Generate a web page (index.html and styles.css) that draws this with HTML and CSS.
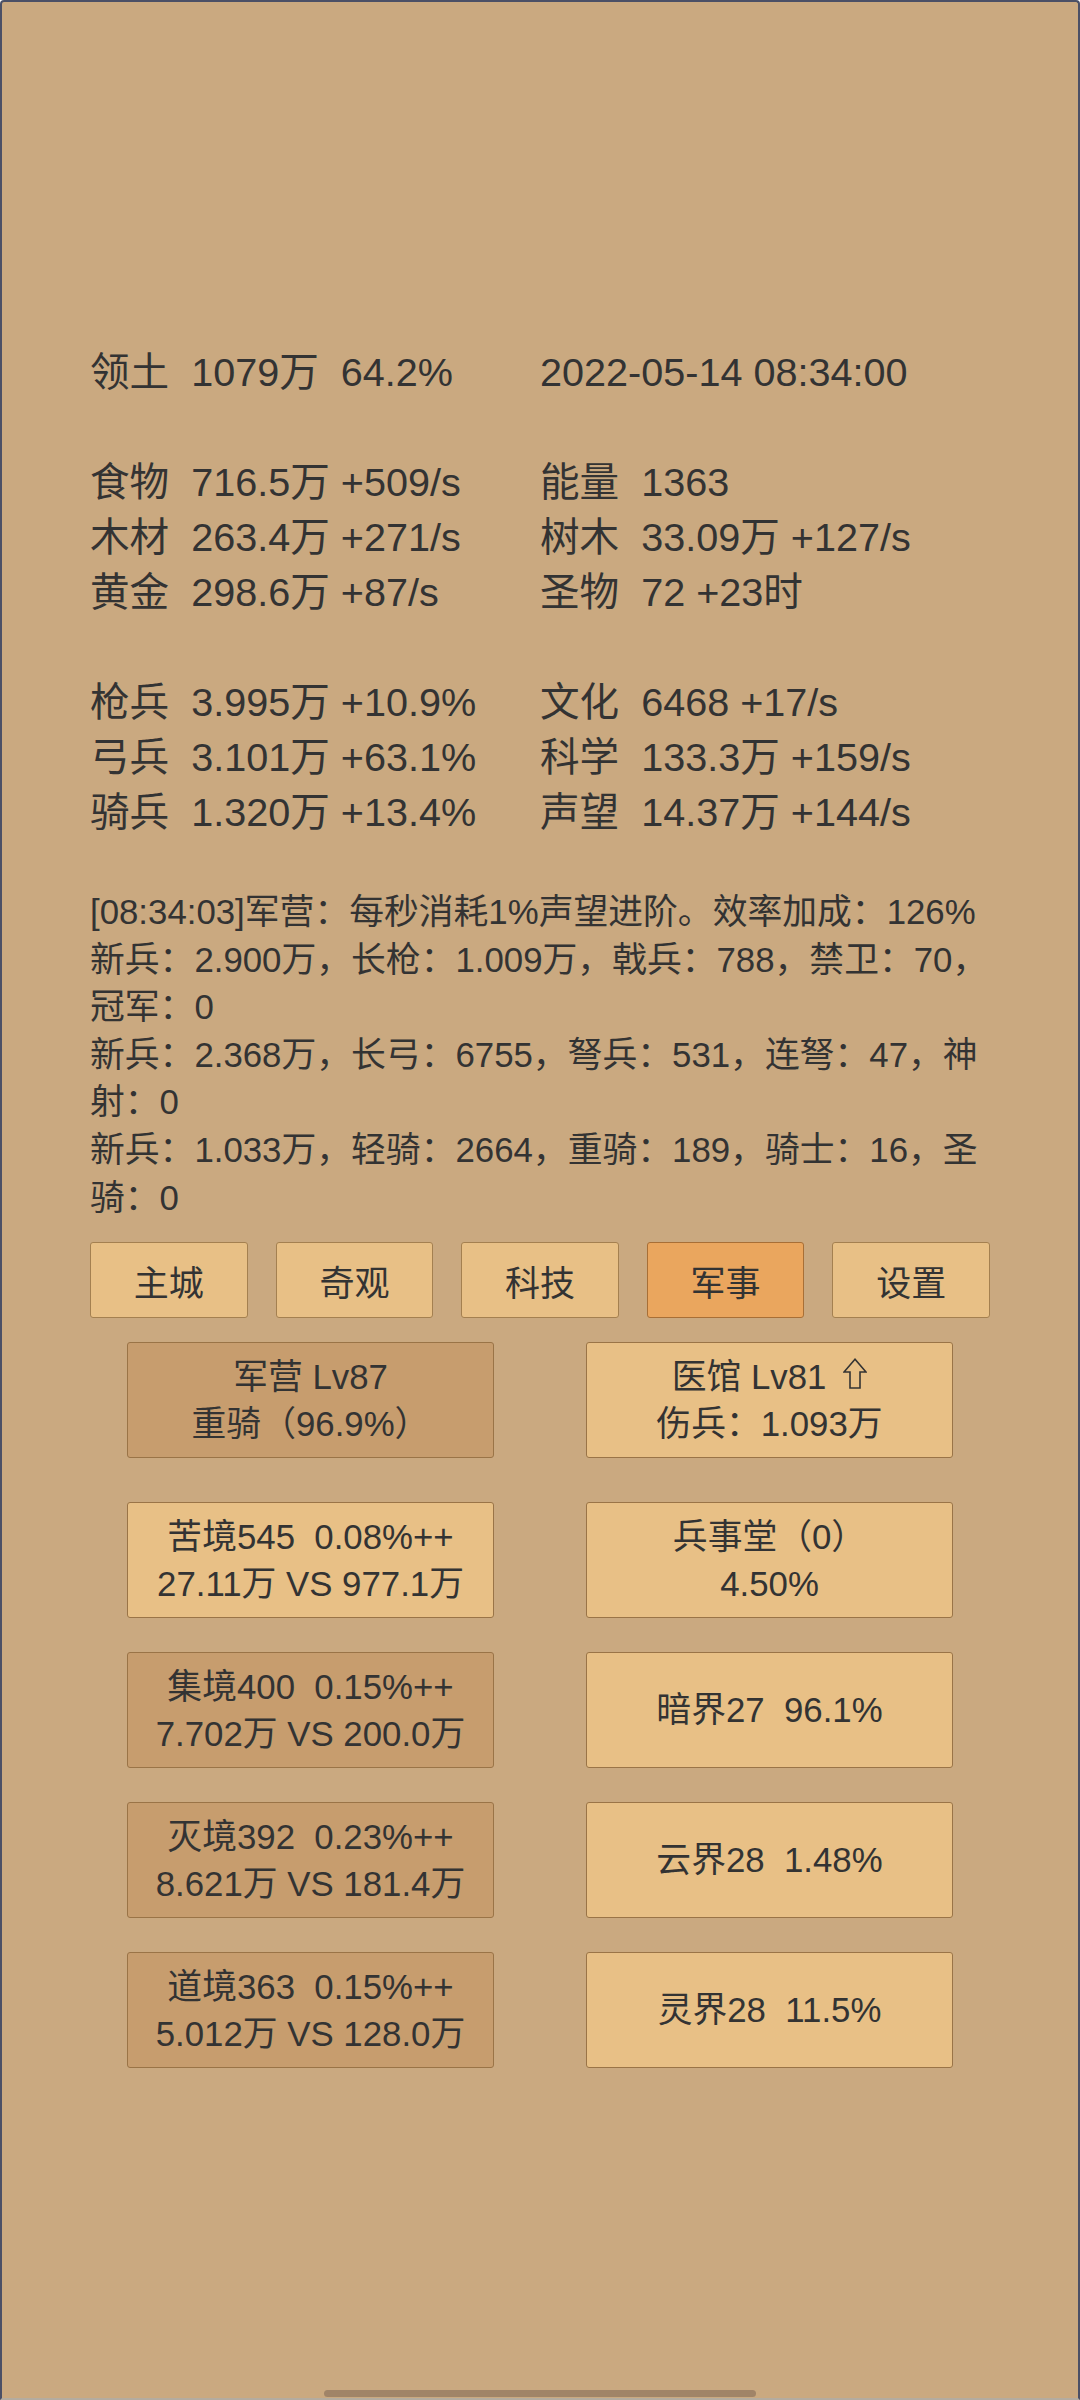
FILE: index.html
```html
<!DOCTYPE html>
<html lang="zh-CN">
<head>
<meta charset="utf-8">
<title>军事</title>
<link rel="stylesheet" href="styles.css">
</head>
<body>
<div class="screen">
  <div class="content">
    <div class="stats">
      <div class="group">
        <div class="line">领土  1079万  64.2%</div>
        <div class="line">2022-05-14 08:34:00</div>
      </div>
      <div class="group">
        <div class="line">食物  716.5万 +509/s</div>
        <div class="line">能量  1363</div>
        <div class="line">木材  263.4万 +271/s</div>
        <div class="line">树木  33.09万 +127/s</div>
        <div class="line">黄金  298.6万 +87/s</div>
        <div class="line">圣物  72 +23时</div>
      </div>
      <div class="group">
        <div class="line">枪兵  3.995万 +10.9%</div>
        <div class="line">文化  6468 +17/s</div>
        <div class="line">弓兵  3.101万 +63.1%</div>
        <div class="line">科学  133.3万 +159/s</div>
        <div class="line">骑兵  1.320万 +13.4%</div>
        <div class="line">声望  14.37万 +144/s</div>
      </div>
    </div>

    <div class="log">
      <p>[08:34:03]军营：每秒消耗1%声望进阶。效率加成：126%</p>
      <p>新兵：2.900万，长枪：1.009万，戟兵：788，禁卫：70，冠军：0</p>
      <p>新兵：2.368万，长弓：6755，弩兵：531，连弩：47，神射：0</p>
      <p>新兵：1.033万，轻骑：2664，重骑：189，骑士：16，圣骑：0</p>
    </div>

    <nav class="tabs">
      <div class="tab">主城</div>
      <div class="tab">奇观</div>
      <div class="tab">科技</div>
      <div class="tab active">军事</div>
      <div class="tab">设置</div>
    </nav>

    <div class="cards first">
      <div class="card dark"><span>军营 Lv87</span><span>重骑（96.9%）</span></div>
      <div class="card"><span>医馆 Lv81<svg class="arrow" viewBox="0 0 24 31" width="24" height="31" aria-hidden="true"><path d="M12 1.2 L1 14 H7 V30 H17 V14 H23 Z" fill="none" stroke="#333333" stroke-width="1.6" stroke-linejoin="miter"/></svg></span><span>伤兵：1.093万</span></div>
    </div>
    <div class="cards">
      <div class="card"><span>苦境545  0.08%++</span><span>27.11万 VS 977.1万</span></div>
      <div class="card"><span>兵事堂（0）</span><span>4.50%</span></div>
      <div class="card dark"><span>集境400  0.15%++</span><span>7.702万 VS 200.0万</span></div>
      <div class="card"><span>暗界27  96.1%</span></div>
      <div class="card dark"><span>灭境392  0.23%++</span><span>8.621万 VS 181.4万</span></div>
      <div class="card"><span>云界28  1.48%</span></div>
      <div class="card dark"><span>道境363  0.15%++</span><span>5.012万 VS 128.0万</span></div>
      <div class="card"><span>灵界28  11.5%</span></div>
    </div>
  </div>
  <div class="home-bar"></div>
</div>
</body>
</html>
```

FILE: styles.css
```css
html, body {
  margin: 0;
  padding: 0;
}

body {
  width: 1080px;
  height: 2400px;
  font-family: "Liberation Sans", "Noto Sans CJK SC", sans-serif;
  color: #333333;
}

.screen {
  position: relative;
  box-sizing: border-box;
  width: 1080px;
  height: 2400px;
  background: #caa980;
  border: 2px solid #4b5066;
  border-bottom-color: #b4aca0;
  border-radius: 4px 4px 0 0;
  overflow: hidden;
}

.content {
  box-sizing: border-box;
  width: 900px;
  margin: 0 auto;
  padding-top: 343px;
}

/* stats */
.stats {
  font-size: 39.6px;
  line-height: 55px;
}

.group {
  display: grid;
  grid-template-columns: 450px 450px;
}

.group + .group {
  margin-top: 55px;
}

.line {
  white-space: pre;
}

/* log */
.log {
  margin-top: 48px;
  font-size: 34.8px;
  line-height: 47.6px;
}

.log p {
  margin: 0;
}

/* tabs */
.tabs {
  display: flex;
  gap: 28px;
  margin-top: 21px;
}

.tab {
  flex: 1;
  height: 76px;
  box-sizing: border-box;
  display: flex;
  align-items: center;
  justify-content: center;
  background: #e8c086;
  border: 1.5px solid #a48050;
  border-radius: 3px;
  font-size: 35px;
}

.tab.active {
  background: #eaa65e;
  border-color: #a86f36;
}

/* cards */
.cards {
  display: grid;
  grid-template-columns: 367px 367px;
  column-gap: 92px;
  row-gap: 34px;
  width: 826px;
  margin: 24px auto 0;
}

.cards.first + .cards {
  margin-top: 44px;
}

.card {
  height: 116px;
  box-sizing: border-box;
  display: flex;
  flex-direction: column;
  align-items: center;
  justify-content: center;
  background: #e8c086;
  border: 1.5px solid #9a7447;
  border-radius: 3px;
  font-size: 34.8px;
  line-height: 47.6px;
  white-space: pre;
  text-align: center;
}

.card.dark {
  background: #c79d6e;
}

.arrow {
  vertical-align: baseline;
  margin-left: 17px;
}

.home-bar {
  position: absolute;
  left: 322px;
  bottom: 1px;
  width: 432px;
  height: 7px;
  border-radius: 4px;
  background: #a08468;
}
```
